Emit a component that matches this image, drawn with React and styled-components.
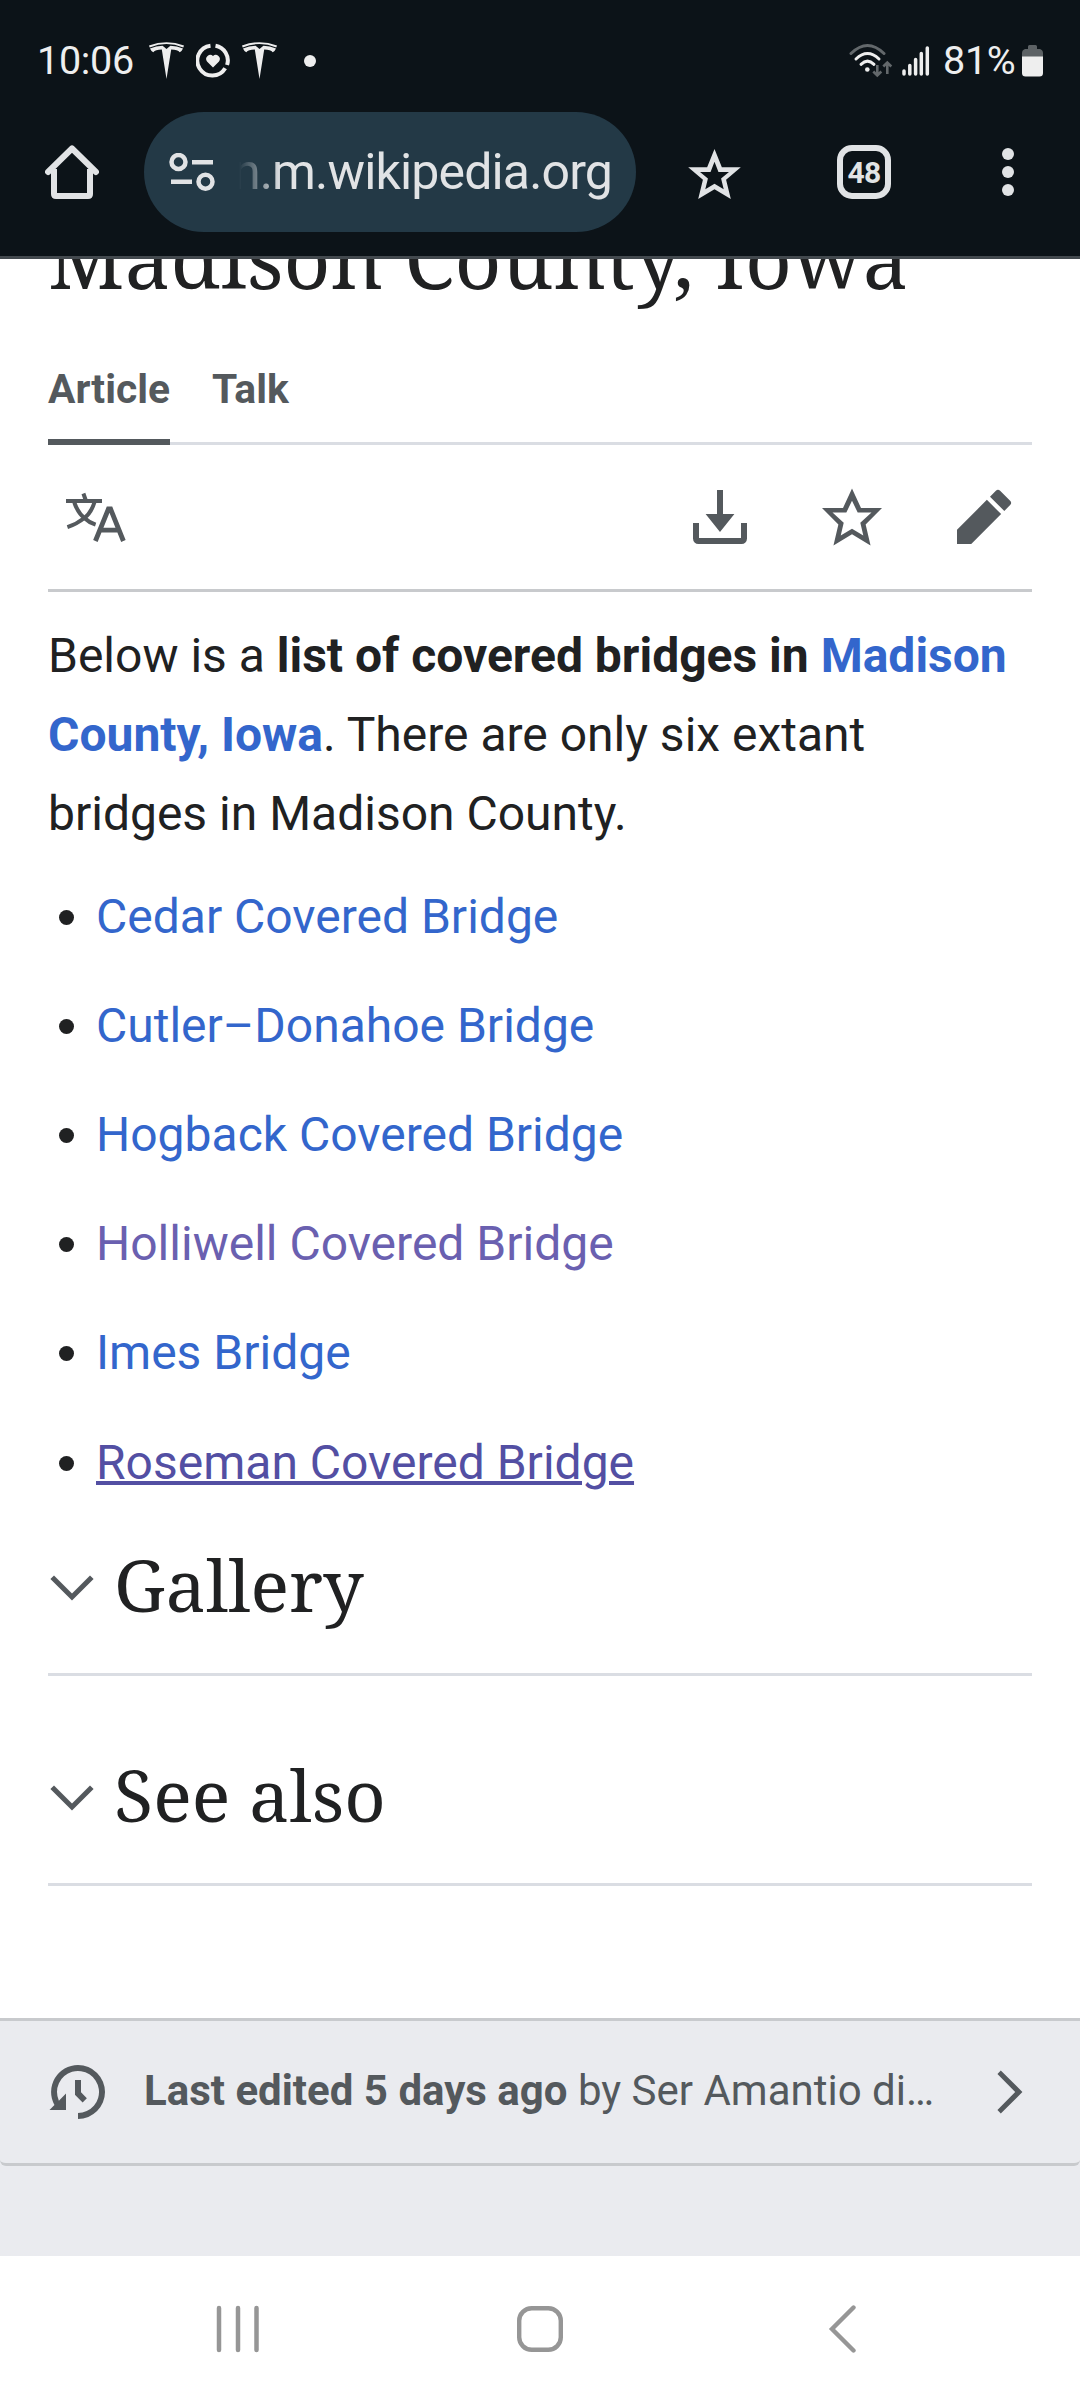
import React from "react"
import styled, { createGlobalStyle } from "styled-components"

const GlobalStyle = createGlobalStyle`
  * {
    box-sizing: border-box;
  }

  body {
    margin: 0;
    background-color: #ffffff;
    color: #202122;
    font-family: Roboto, "Liberation Sans", sans-serif;
  }

  svg {
    display: block;
    flex: none;
  }
`

const bridges = [
  { name: "Cedar Covered Bridge" },
  { name: "Cutler–Donahoe Bridge" },
  { name: "Hogback Covered Bridge" },
  { name: "Holliwell Covered Bridge", visited: true },
  { name: "Imes Bridge" },
  { name: "Roseman Covered Bridge", active: true },
]

const sections = ["Gallery", "See also"]

const Screen = styled.div`
  width: 1080px;
  height: 2400px;
  display: flex;
  flex-direction: column;
  overflow: hidden;
`

const BrowserHeader = styled.header`
  height: 259px;
  flex: none;
  background-color: #0c1318;
  border-bottom: 3px solid #43494e;
  color: #e1e3e5;
`

const StatusBar = styled.div`
  height: 112px;
  padding: 9px 37px 0 37px;
  display: flex;
  justify-content: space-between;
  align-items: center;
  color: #eeeeee;
  font-size: 39.5px;
  line-height: 46px;
`

const StatusGroup = styled.div`
  display: flex;
  align-items: center;
`

const Clock = styled.span`
  width: 112px;
  letter-spacing: -0.3px;
`

const Battery = styled.span`
  width: 79px;
  margin-left: 13px;
  letter-spacing: -0.3px;
`

const Toolbar = styled.div`
  height: 120px;
  display: flex;
  align-items: center;
`

const ToolbarButton = styled.div`
  width: ${({ $width }) => $width}px;
  height: 120px;
  display: flex;
  align-items: center;
  justify-content: center;
`

const AddressBar = styled.div`
  width: 492px;
  height: 120px;
  padding: 0 24px 0 25px;
  border-radius: 60px;
  background-color: #233946;
  display: flex;
  align-items: center;
  gap: 24px;
`

const Url = styled.div`
  flex: 1;
  display: flex;
  justify-content: flex-end;
  overflow: hidden;
  font-size: 50px;
  letter-spacing: -0.85px;
  line-height: 70px;
  white-space: nowrap;
  mask-image: linear-gradient(to right, transparent 0, #000 42px);
`

const TabCount = styled.div`
  width: 54px;
  height: 54px;
  border: 6px solid #e1e3e5;
  border-radius: 15px;
  display: flex;
  align-items: center;
  justify-content: center;
  font-size: 30px;
  font-weight: 700;
  letter-spacing: -0.6px;
`

const Article = styled.main`
  height: 1759px;
  flex: none;
  padding: 0 48px;
  overflow: hidden;
`

const Title = styled.h1`
  height: 106px;
  margin: -55px 0 0;
  font-family: "Noto Serif", "DejaVu Serif Condensed", "DejaVu Serif", serif;
  font-size: 81.6px;
  font-weight: 400;
  line-height: 108px;
  white-space: nowrap;
`

const Tabs = styled.nav`
  height: 135px;
  border-bottom: 3px solid #dadde3;
  display: flex;
  align-items: flex-end;
  gap: 42px;
`

const Tab = styled.a`
  height: 81px;
  margin-bottom: -3px;
  border-bottom: 6px solid ${({ $selected }) => ($selected ? "#54595d" : "transparent")};
  color: #54595d;
  font-size: 40.8px;
  font-weight: 700;
  line-height: 50px;
`

const PageActions = styled.div`
  height: 147px;
  padding: 0 18px;
  border-bottom: 3px solid #c8cacd;
  display: flex;
  align-items: center;
  gap: 72px;
  color: #54595d;

  svg:first-child {
    margin-right: auto;
  }
`

const Intro = styled.p`
  margin: 0;
  padding-top: 24px;
  font-size: 48px;
  line-height: 79.2px;
`

const Link = styled.a`
  color: ${({ $visited, $active }) =>
    $active ? "#534fa3" : $visited ? "#6a60b0" : "#3366cc"};
  ${({ $active }) =>
    $active
      ? `
    text-decoration: underline;
    text-decoration-thickness: 4px;
  `
      : ``}
`

const BridgeList = styled.ul`
  margin: 23px 0 24px;
  padding: 0;
  list-style: none;
  font-size: 48px;
  line-height: 79.2px;
`

const BridgeItem = styled.li`
  height: 109.2px;
  display: flex;
  align-items: flex-start;

  &::before {
    content: "";
    width: 15px;
    height: 15px;
    margin: 33px 22px 0 11px;
    border-radius: 50%;
    background-color: #202122;
  }
`

const SectionHeading = styled.h2`
  height: 120px;
  margin: 0 0 90px;
  border-bottom: 3px solid #dadde3;
  display: flex;
  align-items: flex-start;
  gap: 18px;
  font-family: "Noto Serif", "DejaVu Serif Condensed", "DejaVu Serif", serif;
  font-size: 72px;
  font-weight: 400;
  line-height: 56px;

  svg {
    margin-top: 8px;
    color: #54595d;
  }
`

const Footer = styled.footer`
  height: 238px;
  flex: none;
  background-color: #eaebef;
`

const LastEdited = styled.div`
  height: 148px;
  padding: 0 48px;
  border-top: 3px solid #c8cacd;
  border-bottom: 3px solid #c8cacd;
  border-radius: 0 0 6px 6px;
  display: flex;
  align-items: center;
  color: #54595d;
  font-size: 42px;
`

const EditedText = styled.div`
  width: 794px;
  margin: 0 auto 0 36px;
  padding-bottom: 3px;
  overflow: hidden;
  text-overflow: ellipsis;
  white-space: nowrap;
`

const NavigationBar = styled.div`
  height: 144px;
  padding: 1px 202px 0;
  display: flex;
  align-items: center;
  justify-content: space-between;
  color: #969696;
`

function TeslaIcon() {
  return (
    <svg width="35" height="37" viewBox="0 0 35 37" fill="currentColor">
      <path d="M0 3.6Q17.5-3.2 35 3.6L34.3 5.4Q17.5-1.4.7 5.4Z" />
      <path d="M1 6.5Q7 4 13.6 3.8L17.5 7 21.4 3.8Q28 4 34 6.5 32.6 9.8 30.7 10.3 28.7 7.6 22.2 7.6L17.5 37 12.8 7.6Q6.3 7.6 4.3 10.3 2.4 9.8 1 6.5Z" />
    </svg>
  )
}

function HeartRingIcon() {
  return (
    <svg width="34" height="35" viewBox="0 0 34 35" fill="none">
      <path
        d="M19.5 2.7A15 15 0 0 1 31.1 22M29.2 25.3A15 15 0 1 1 14.5 2.7"
        stroke="currentColor"
        strokeWidth="4"
      />
      <path
        d="M17 24.5 11 18.4A4.1 4.1 0 0 1 17 12.9 4.1 4.1 0 0 1 23 18.4Z"
        fill="currentColor"
      />
    </svg>
  )
}

function WifiIcon() {
  return (
    <svg width="44" height="35" viewBox="0 0 44 35" fill="none" strokeWidth="3">
      <g strokeLinecap="round">
        <path d="M2 10.5Q18.5-5.5 35 10.5" stroke="#63686b" />
        <path d="M7 16Q18.5 5 30 16M12 21.3Q18.5 15 25 21.3" stroke="currentColor" />
      </g>
      <circle cx="18.3" cy="26.5" r="2.3" fill="currentColor" />
      <path
        d="M28.3 22V32M24.3 28.5 28.3 32.5 32.3 28.5M38.3 31V20M34.3 23.5 38.3 19.5 42.3 23.5"
        stroke="#63686b"
        strokeWidth="2.6"
      />
    </svg>
  )
}

function SignalIcon() {
  return (
    <svg width="28" height="30" viewBox="0 0 28 30">
      <path
        d="M2 25V28M7.8 19.5V28M13.6 13.5V28M19.3 7.5V28M25.3 2V28"
        stroke="currentColor"
        strokeWidth="3.5"
        strokeLinecap="round"
      />
    </svg>
  )
}

function BatteryIcon() {
  return (
    <svg width="21" height="32" viewBox="0 0 21 32">
      <path d="M6 4V1.5Q6 0 7.5 0H13.5Q15 0 15 1.5V4H18Q21 5 21 8V12H0V8Q0 5 3 4Z" fill="#5d6265" />
      <path d="M0 11.5H21V28Q21 31.5 17.5 31.5H3.5Q0 31.5 0 28Z" fill="currentColor" />
    </svg>
  )
}

function HomeIcon() {
  return (
    <svg
      width="54"
      height="54"
      viewBox="0 0 54 54"
      fill="none"
      stroke="currentColor"
      strokeWidth="6"
    >
      <path d="M9 24V49Q9 51 11 51H43Q45 51 45 49V24" />
      <path d="M3 27 27 3.5 51 27" strokeLinecap="round" strokeLinejoin="round" />
    </svg>
  )
}

function SiteSettingsIcon() {
  return (
    <svg
      width="46"
      height="38"
      viewBox="0 0 46 38"
      fill="none"
      stroke="currentColor"
      strokeWidth="4.5"
    >
      <circle cx="9.5" cy="9" r="7" />
      <circle cx="36.5" cy="28.7" r="7" />
      <path d="M23 9.2H44M2 28.7H23" />
    </svg>
  )
}

const BookmarkSvg = styled.svg`
  margin-top: 4px;
`

function BookmarkIcon() {
  return (
    <BookmarkSvg width="53" height="50" viewBox="2 2 20 19" fill="currentColor">
      <path d="M22 8.9h-7.2L12 2 9.2 8.9H2l5.6 4.8L5.8 21 12 17.27 18.2 21l-1.8-7.3zM12 15.2l-3.5 2.1 1-4.1-3-2.5h4L12 6.8l1.5 3.9h4l-3 2.5 1 4.1z" />
    </BookmarkSvg>
  )
}

function MoreIcon() {
  return (
    <svg width="12" height="48" viewBox="0 0 12 48" fill="currentColor">
      <circle cx="6" cy="6" r="6" />
      <circle cx="6" cy="24" r="6" />
      <circle cx="6" cy="42" r="6" />
    </svg>
  )
}

function LanguageIcon() {
  return (
    <svg width="60" height="60" viewBox="0 0 60 60" fill="none" stroke="currentColor">
      <g strokeWidth="4">
        <path d="M17.4 6.5 20 14M0 14H36" />
        <path d="M8.3 15.5Q12 26 18.4 31 23 35.5 29.6 37.6" />
        <path d="M28.4 15.5Q25 26 18.4 31 10.5 37.2 1.4 40.2" />
      </g>
      <path
        d="M29.4 54 42.4 22H44.6L57.4 54M33.5 43.2H53.5"
        strokeWidth="4.8"
      />
    </svg>
  )
}

// 20 unit grid, shared by the wiki icons
function WikiIcon({ size = 60, d }) {
  return (
    <svg width={size} height={size} viewBox="0 0 20 20" fill="currentColor">
      <path d={d} />
    </svg>
  )
}

const icons = {
  download:
    "M17 12v5H3v-5H1v5.2A1.8 1.8 0 0 0 2.8 19h14.4a1.8 1.8 0 0 0 1.8-1.8V12zM10 15l4.8-6H11V1H9v8H5.2z",
  star: "M20 7h-7L10 .5 7 7H0l5.46 5.47-1.64 7 6.18-3.7 6.18 3.73-1.63-7zm-10 6.9-3.76 2.27 1-4.28L3.5 8.5h4.61L10 4.6l1.9 3.9h4.6l-3.73 3.4 1 4.28z",
  edit: "m16.77 8 1.94-2a1 1 0 0 0 0-1.41l-3.34-3.3a1 1 0 0 0-1.41 0L12 3.23zM1 14.25V19h4.75l9.96-9.96-4.75-4.75z",
  expand: "m17.5 4.75-7.5 7.5-7.5-7.5L1 6.25l9 9 9-9z",
  next: "M7 1 5.6 2.5 13 10l-7.4 7.5L7 19l9-9z",
  history:
    "M9 6v5h.06l2.48 2.47 1.41-1.41L11 10.11V6zM10 1a9 9 0 0 0-7.85 13.35L.5 16H6v-5.5l-2.38 2.38A7 7 0 1 1 10 17v2a9 9 0 0 0 0-18z",
}

const NotificationIcons = styled(StatusGroup)`
  gap: 12px;

  svg:last-child {
    margin-left: 15px;
  }
`

const SignalIcons = styled(StatusGroup)`
  gap: 9px;
`

function Header() {
  return (
    <BrowserHeader>
      <StatusBar>
        <StatusGroup>
          <Clock>10:06</Clock>
          <NotificationIcons>
            <TeslaIcon />
            <HeartRingIcon />
            <TeslaIcon />
            <svg width="12" height="12" viewBox="0 0 12 12">
              <circle cx="6" cy="6" r="6" fill="currentColor" />
            </svg>
          </NotificationIcons>
        </StatusGroup>
        <StatusGroup>
          <SignalIcons>
            <WifiIcon />
            <SignalIcon />
          </SignalIcons>
          <Battery>81%</Battery>
          <BatteryIcon />
        </StatusGroup>
      </StatusBar>
      <Toolbar>
        <ToolbarButton $width={144}>
          <HomeIcon />
        </ToolbarButton>
        <AddressBar>
          <SiteSettingsIcon />
          <Url>
            <span>n.m.wikipedia.org</span>
          </Url>
        </AddressBar>
        <ToolbarButton $width={156}>
          <BookmarkIcon />
        </ToolbarButton>
        <ToolbarButton $width={144}>
          <TabCount>48</TabCount>
        </ToolbarButton>
        <ToolbarButton $width={144}>
          <MoreIcon />
        </ToolbarButton>
      </Toolbar>
    </BrowserHeader>
  )
}

function App() {
  return (
    <>
      <GlobalStyle />
      <Screen>
        <Header />
        <Article>
          <Title>Madison County, Iowa</Title>
          <Tabs>
            <Tab $selected>Article</Tab>
            <Tab>Talk</Tab>
          </Tabs>
          <PageActions>
            <LanguageIcon />
            <WikiIcon d={icons.download} />
            <WikiIcon d={icons.star} />
            <WikiIcon d={icons.edit} />
          </PageActions>
          <Intro>
            Below is a{" "}
            <b>
              list of covered bridges in <Link>Madison County, Iowa</Link>
            </b>
            . There are only six extant bridges in Madison County.
          </Intro>
          <BridgeList>
            {bridges.map((bridge) => (
              <BridgeItem key={bridge.name}>
                <Link $visited={bridge.visited} $active={bridge.active}>
                  {bridge.name}
                </Link>
              </BridgeItem>
            ))}
          </BridgeList>
          {sections.map((section) => (
            <SectionHeading key={section}>
              <WikiIcon size={48} d={icons.expand} />
              {section}
            </SectionHeading>
          ))}
        </Article>
        <Footer>
          <LastEdited>
            <WikiIcon d={icons.history} />
            <EditedText>
              <b>Last edited 5 days ago</b> by Ser Amantio di Nicolao
            </EditedText>
            <WikiIcon size={48} d={icons.next} />
          </LastEdited>
        </Footer>
        <NavigationBar>
          <svg width="72" height="48" viewBox="0 0 72 48">
            <path
              d="M17 3V45M36 3V45M54.5 3V45"
              stroke="currentColor"
              strokeWidth="4.5"
              strokeLinecap="round"
            />
          </svg>
          <svg width="48" height="48" viewBox="0 0 48 48" fill="none">
            <rect
              x="3.2"
              y="3.2"
              width="41.6"
              height="41.6"
              rx="12.5"
              stroke="currentColor"
              strokeWidth="4.4"
            />
          </svg>
          <svg width="72" height="48" viewBox="0 0 72 48" fill="none">
            <path
              d="M47.5 2.5 26 24 47.5 45.5"
              stroke="currentColor"
              strokeWidth="4.4"
              strokeLinecap="round"
            />
          </svg>
        </NavigationBar>
      </Screen>
    </>
  )
}

export default App
